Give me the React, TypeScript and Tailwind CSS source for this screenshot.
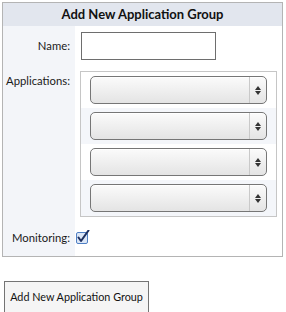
import React from "react";

const SelectBox = () => (
  <div className="flex h-[28px] w-[177px] rounded-[5px] border border-[#767676] bg-gradient-to-b from-[#fbfbfb] to-[#e4e4e4] shadow-[inset_0_1px_0_#fff]">
    <div className="flex-1" />
    <div className="flex w-[17px] flex-col items-center justify-center gap-[1px] border-l border-[#c9c9c9]">
      <svg width="6" height="4" viewBox="0 0 6 4">
        <path d="M3 0 L6 4 L0 4 Z" fill="#333" />
      </svg>
      <svg width="6" height="4" viewBox="0 0 6 4">
        <path d="M0 0 L6 0 L3 4 Z" fill="#333" />
      </svg>
    </div>
  </div>
);

const Checkbox = () => (
  <svg width="14" height="14" viewBox="0 0 14 14">
    <rect x="0.5" y="2.5" width="11" height="11" rx="1.5" fill="#dbe6f6" stroke="#4f7fc4" />
    <path d="M2.5 7.5 L5 11 L12.5 0.5" fill="none" stroke="#1d2f5e" strokeWidth="2" strokeLinecap="round" strokeLinejoin="round" />
  </svg>
);

export default function App() {
  const rows = [0, 1, 2, 3];

  return (
    <div className="min-h-screen bg-white pt-[2px] text-[11.3px] text-[#1a1a1a]" style={{ fontFamily: "Lato, Arial, sans-serif" }}>
      {/* Form table */}
      <div className="ml-[2px] w-[281px] border border-[#b4b4b4]">
        <div className="flex h-[23px] items-center justify-center bg-[#e2e6ee] text-[13px] font-bold text-[#111]">
          Add New Application Group
        </div>

        {/* Name row */}
        <div className="flex">
          <div className="flex w-[72px] items-center justify-end bg-[#f3f5f9] pr-[5px]">Name:</div>
          <div className="pl-[6px] pt-[6px] pb-[7px]">
            <div className="h-[28px] w-[135px] border border-[#6e6e6e] bg-white" />
          </div>
        </div>

        {/* Applications row */}
        <div className="flex">
          <div className="w-[72px] whitespace-nowrap bg-[#f3f5f9] pr-[5px] pt-[6px] text-right">Applications:</div>
          <div className="pl-[5px] py-[4px]">
            <div className="w-[197px] border border-[#c6c6c6]">
              {rows.map((i) => (
                <div
                  key={i}
                  className={`h-[36px] pl-[9px] pt-[4px] ${i % 2 === 1 ? "bg-[#f4f6fa]" : "bg-white"}`}
                >
                  <SelectBox />
                </div>
              ))}
            </div>
          </div>
        </div>

        {/* Monitoring row */}
        <div className="flex h-[35px]">
          <div className="flex w-[72px] items-center justify-end whitespace-nowrap bg-[#f3f5f9] pr-[5px] pb-[1px]">Monitoring:</div>
          <div className="flex items-center pl-[1px] pb-[4px]">
            <Checkbox />
          </div>
        </div>
      </div>

      <button className="ml-[4px] mt-[24px] h-[32px] w-[145px] whitespace-nowrap border border-[#747474] bg-[#f5f5f5] px-0 text-[10.8px] text-[#111]">
        Add New Application Group
      </button>
    </div>
  );
}
